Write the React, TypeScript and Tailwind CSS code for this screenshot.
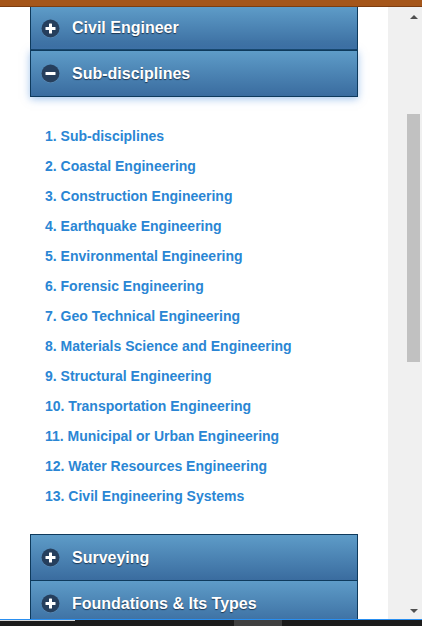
import React from "react";

const items = [
  "1. Sub-disciplines",
  "2. Coastal Engineering",
  "3. Construction Engineering",
  "4. Earthquake Engineering",
  "5. Environmental Engineering",
  "6. Forensic Engineering",
  "7. Geo Technical Engineering",
  "8. Materials Science and Engineering",
  "9. Structural Engineering",
  "10. Transportation Engineering",
  "11. Municipal or Urban Engineering",
  "12. Water Resources Engineering",
  "13. Civil Engineering Systems",
];

function Icon({ minus }: { minus?: boolean }) {
  return (
    <svg width="19" height="19" viewBox="0 0 19 19" className="shrink-0">
      <circle cx="9.5" cy="10" r="9" fill="#6f9cc4" opacity="0.7" />
      <circle cx="9.5" cy="9.5" r="9" fill="#263f5d" />
      <rect x="4.5" y="8" width="10" height="3" rx="0.5" fill="#ffffff" />
      {!minus && <rect x="8" y="4.5" width="3" height="10" rx="0.5" fill="#ffffff" />}
    </svg>
  );
}

function Header({ label, minus, className }: { label: string; minus?: boolean; className: string }) {
  return (
    <div
      className={`flex items-center gap-[12px] pl-[10px] border border-[#0e3a5c] bg-gradient-to-b from-[#5e9cc8] to-[#3a6c9f] text-white font-bold text-[16px] [text-shadow:0_1px_1px_#1d3550] ${className}`}
    >
      <Icon minus={minus} />
      <span>{label}</span>
    </div>
  );
}

export default function App() {
  return (
    <div
      className="h-[626px] w-[422px] flex flex-col overflow-hidden bg-white"
      style={{ fontFamily: '"Liberation Sans", Arial, sans-serif' }}
    >
      <div className="h-[7px] shrink-0 bg-[#a5561a] border-b border-[#7d3d10]" />
      <div className="flex-1 flex min-h-0">
        <div className="w-[388px] pl-[30px] overflow-hidden">
          <div className="w-[328px]">
            <Header label="Civil Engineer" className="h-[43px] border-t-0" />
            <Header
              label="Sub-disciplines"
              minus
              className="h-[47px] border-t-[#0e3a5c] shadow-[0_2px_8px_rgba(90,150,220,0.55)]"
            />
            <ul className="pt-[24px] pl-[15px] pb-[23px]">
              {items.map((t) => (
                <li key={t} className="h-[30px] leading-[30px] text-[14px] font-bold text-[#2a86d4]">
                  {t}
                </li>
              ))}
            </ul>
            <Header label="Surveying" className="h-[47px]" />
            <Header label="Foundations & Its Types" className="h-[46px] border-t-0" />
          </div>
        </div>
        <div className="flex-1 bg-[#f0f0f0] flex justify-end">
          <div className="w-[17px] flex flex-col items-center">
            <div className="h-[18px] flex items-center justify-center pt-[2px]">
              <div className="w-0 h-0 border-l-[4px] border-r-[4px] border-b-[4px] border-l-transparent border-r-transparent border-b-[#505050]" />
            </div>
            <div className="mt-[89px] w-[13px] h-[248px] bg-[#c1c1c1]" />
            <div className="flex-1" />
            <div className="h-[16px] flex items-center justify-center">
              <div className="w-0 h-0 border-l-[4px] border-r-[4px] border-t-[4px] border-l-transparent border-r-transparent border-t-[#505050]" />
            </div>
          </div>
        </div>
      </div>
      <div className="h-[7px] shrink-0 border-t border-[#2a8ff0] bg-[#1c1c1c] flex">
        <div className="w-[75px] border-t border-[#d8d8d8]" />
        <div className="w-[159px]" />
        <div className="w-[48px] bg-[#404040]" />
      </div>
    </div>
  );
}
